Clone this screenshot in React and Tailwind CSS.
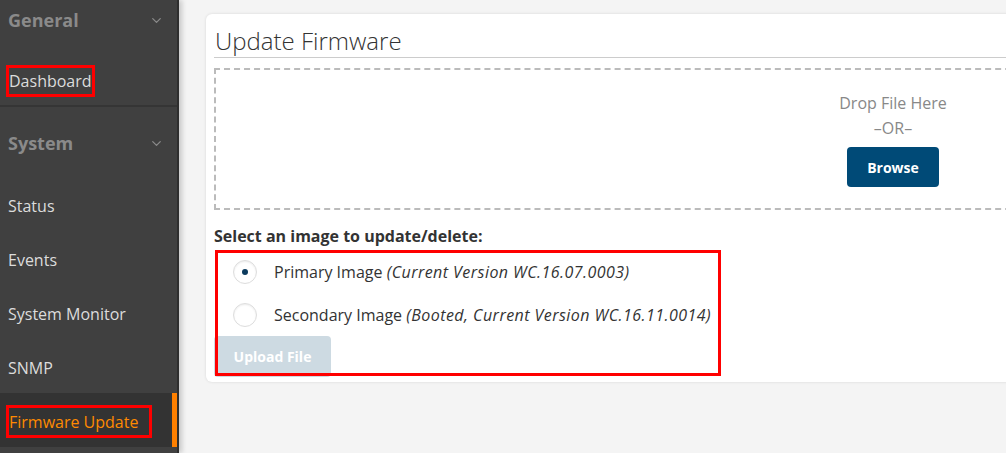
import { ChevronDown } from 'lucide-react';

const items = ['Status', 'Events', 'System Monitor', 'SNMP'];

export default function App() {
  return (
    <div className="flex h-screen w-full overflow-hidden bg-[#f4f4f4] font-['Open_Sans',sans-serif]">
      {/* Sidebar */}
      <aside className="relative z-10 w-[179px] shrink-0 border-r-2 border-[#2e2e2e] bg-[#404040] shadow-[3px_0_5px_rgba(0,0,0,0.18)]">
        <div className="flex h-[53px] items-center justify-between pb-[13px] pl-[8px] pr-[13px]">
          <span className="text-[18px] font-bold text-[#8a8a8a]">General</span>
          <ChevronDown className="h-[15px] w-[15px] text-[#8a8a8a]" strokeWidth={2} />
        </div>
        <div className="flex h-[54px] items-center border-b-2 border-[#353535] pt-[4px]">
          <span className="ml-[6px] border-[3px] border-[#ff0000] text-[16px] leading-[26px] text-[#dcdcdc]">
            Dashboard
          </span>
        </div>
        <div className="flex h-[70px] items-center justify-between pl-[8px] pr-[13px] pt-[2px]">
          <span className="text-[18px] font-bold text-[#8a8a8a]">System</span>
          <ChevronDown className="h-[15px] w-[15px] text-[#8a8a8a]" strokeWidth={2} />
        </div>
        {items.map((item) => (
          <div key={item} className="flex h-[54px] items-center pl-[8px] pt-[4px] text-[16px] text-[#dcdcdc]">
            {item}
          </div>
        ))}
        <div className="flex h-[54px] items-center border-r-[5px] border-[#ff8000] bg-[#333333] pt-[3px]">
          <span className="ml-[6px] flex h-[33px] w-[146px] items-center border-[3px] border-[#ff0000] text-[16px] text-[#ff8a00]">
            Firmware Update
          </span>
        </div>
      </aside>

      {/* Main */}
      <main className="flex-1 overflow-hidden pl-[27px] pt-[14px]">
        <div className="w-[1374px] rounded-md bg-white px-[8px] pb-[5px] shadow-[0_0_3px_rgba(0,0,0,0.12)]">
          <h1 className="border-b border-[#cccccc] pl-[1px] pt-[11px] text-[24px] font-light leading-[32px] text-[#333333]">
            Update Firmware
          </h1>

          <div className="mt-[10px] flex h-[142px] flex-col items-center border-2 border-dashed border-[#bbbbbb] pt-[21px]">
            <span className="text-[16px] leading-[25px] text-[#888888]">Drop File Here</span>
            <span className="text-[16px] leading-[25px] text-[#888888]">–OR–</span>
            <button className="mt-[6px] h-[40px] w-[92px] rounded-[4px] bg-[#004a77] text-[14px] font-bold text-white">
              Browse
            </button>
          </div>

          <div className="mt-[14px] text-[16px] font-bold leading-[24px] text-[#333333]">
            Select an image to update/delete:
          </div>

          <div className="relative mt-[2px]">
            <div className="flex h-[43px] items-center gap-[17px] pl-[19px] text-[16px] text-[#333333]">
              <span className="flex h-[24px] w-[24px] items-center justify-center rounded-full border border-[#dddddd] bg-white shadow-[inset_0_1px_2px_rgba(0,0,0,0.08)]">
                <span className="h-[6px] w-[6px] rounded-full bg-[#0b3b5e]" />
              </span>
              <span>
                Primary Image <i className="tracking-[0.45px]">(Current Version WC.16.07.0003)</i>
              </span>
            </div>
            <div className="flex h-[43px] items-center gap-[17px] pl-[19px] text-[16px] text-[#333333]">
              <span className="h-[24px] w-[24px] rounded-full border border-[#dddddd] bg-white shadow-[inset_0_1px_2px_rgba(0,0,0,0.08)]" />
              <span>
                Secondary Image <i className="tracking-[0.45px]">(Booted, Current Version WC.16.11.0014)</i>
              </span>
            </div>
            <button className="h-[41px] w-[117px] rounded-[4px] bg-[#cddae2] text-[14px] font-bold text-white">
              Upload File
            </button>
            {/* annotation box */}
            <div className="pointer-events-none absolute left-[1px] top-0 h-[126px] w-[506px] border-[3px] border-[#ff0000]" />
          </div>
        </div>
      </main>
    </div>
  );
}
